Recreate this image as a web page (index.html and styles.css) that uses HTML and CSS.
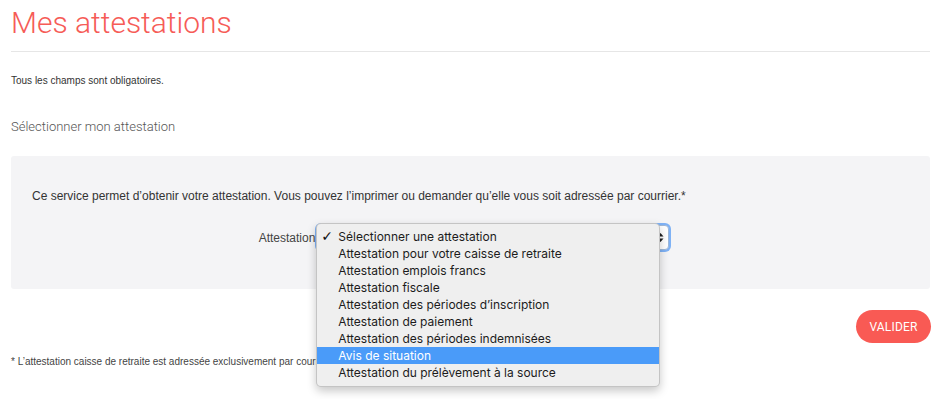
FILE: index.html
```html
<!DOCTYPE html>
<html lang="fr">
<head>
<meta charset="utf-8">
<title>Mes attestations</title>
<link rel="stylesheet" href="styles.css">
</head>
<body>
<main class="page">
  <h1 class="title">Mes attestations</h1>
  <hr class="sep">
  <p class="required">Tous les champs sont obligatoires.</p>
  <h2 class="subtitle">Sélectionner mon attestation</h2>
  <section class="panel">
    <p class="intro">Ce service permet d’obtenir votre attestation. Vous pouvez l’imprimer ou demander qu’elle vous soit adressée par courrier.*</p>
    <div class="form-row">
      <label class="label">Attestation</label>
      <div class="select-wrap">
        <div class="select">
          <span class="select-value">Sélectionner une attestation</span>
          <svg class="arrows" width="7" height="11" viewBox="0 0 7 11"><path d="M3.5 1 L6.5 4.5 H0.5 Z M3.5 10 L6.5 6.5 H0.5 Z" fill="#222"/></svg>
        </div>
        <ul class="menu">
          <li class="item checked"><span class="check">✓</span>Sélectionner une attestation</li>
          <li class="item">Attestation pour votre caisse de retraite</li>
          <li class="item">Attestation emplois francs</li>
          <li class="item">Attestation fiscale</li>
          <li class="item">Attestation des périodes d’inscription</li>
          <li class="item">Attestation de paiement</li>
          <li class="item">Attestation des périodes indemnisées</li>
          <li class="item active">Avis de situation</li>
          <li class="item">Attestation du prélèvement à la source</li>
        </ul>
      </div>
    </div>
  </section>
  <div class="actions">
    <button class="btn" type="button">VALIDER</button>
  </div>
  <p class="note">* L’attestation caisse de retraite est adressée exclusivement par courrier.</p>
</main>
</body>
</html>
```
FILE: styles.css
```css
html, body {
  margin: 0;
  padding: 0;
  background: #fff;
}
body {
  min-height: 100vh;
}
.page {
  padding: 0 13px 0 11px;
  font-family: "Liberation Sans", Arial, sans-serif;
  color: #333;
}
.title {
  margin: 4px 0 0;
  font-family: Roboto, sans-serif;
  font-weight: 300;
  font-size: 30px;
  line-height: 38px;
  color: #f65c57;
}
.sep {
  margin: 9px 0 0;
  border: 0;
  border-top: 1px solid #e6e6e6;
  height: 0;
}
.required {
  margin: 22px 0 0;
  font-size: 10px;
  line-height: 14px;
  color: #333;
}
.subtitle {
  margin: 31px 0 0;
  font-family: Roboto, sans-serif;
  font-weight: 300;
  font-size: 13px;
  line-height: 16px;
  color: #555;
}
.panel {
  margin-top: 21px;
  background: #f4f4f6;
  border-radius: 3px;
  height: 133px;
  box-sizing: border-box;
  padding: 31px 21px 0;
}
.intro {
  margin: 0;
  font-size: 12px;
  line-height: 18px;
  color: #333;
}
.form-row {
  margin-top: 20px;
  display: flex;
  align-items: center;
  justify-content: center;
  gap: 2px;
  padding-right: 13px;
}
.label {
  font-size: 12px;
  color: #444;
}
.select-wrap {
  position: relative;
}
.select {
  width: 352px;
  height: 25px;
  box-sizing: border-box;
  border: 1px solid #9fb8d8;
  border-radius: 4px;
  background: #fff;
  box-shadow: 0 0 0 2px #7fb2f5;
  display: flex;
  align-items: center;
  justify-content: space-between;
  padding: 0 4px 0 8px;
  font-size: 12px;
}
.select-value {
  visibility: hidden;
}
.arrows {
  display: block;
}
.menu {
  position: absolute;
  left: -1px;
  top: -2px;
  width: 344px;
  box-sizing: border-box;
  margin: 0;
  padding: 4px 0 5px;
  list-style: none;
  background: #efefef;
  border: 1px solid rgba(0,0,0,0.18);
  border-radius: 5px;
  box-shadow: 0 4px 10px rgba(0,0,0,0.22);
  font-family: Inter, "Liberation Sans", sans-serif;
  font-size: 12px;
  color: #1c1c1c;
}
.item {
  position: relative;
  height: 17px;
  line-height: 17px;
  padding-left: 21px;
  white-space: nowrap;
}
.check {
  position: absolute;
  left: 4px;
  top: 0;
  font-family: "DejaVu Sans", sans-serif;
  font-size: 14px;
  font-weight: bold;
  color: #111;
}
.item.active {
  background: #4a9bf9;
  color: #fff;
}
.actions {
  display: flex;
  justify-content: flex-end;
  margin-top: 21px;
  margin-right: -1px;
}
.btn {
  width: 75px;
  height: 33px;
  border: 0;
  border-radius: 17px;
  background: #f95a54;
  color: #fff;
  font-family: Roboto, sans-serif;
  font-size: 12px;
  font-weight: 400;
  letter-spacing: 0.2px;
  padding: 0;
}
.note {
  margin: 12px 0 0;
  font-size: 10px;
  line-height: 14px;
  color: #444;
}
```
